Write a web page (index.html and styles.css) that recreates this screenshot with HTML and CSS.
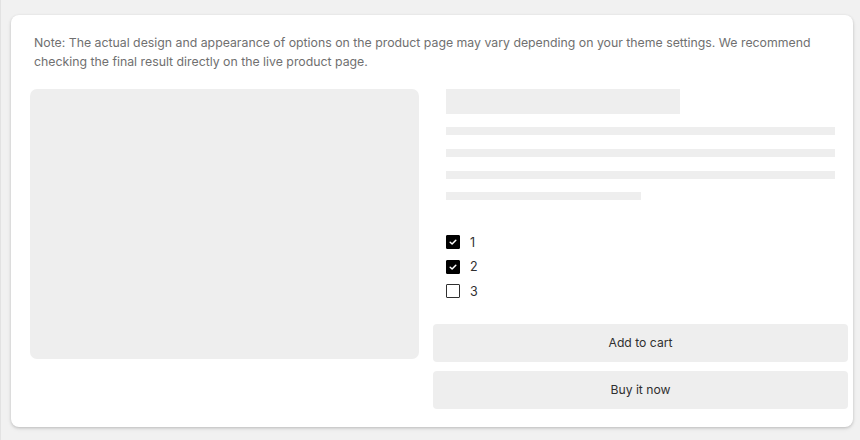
FILE: index.html
```html
<!DOCTYPE html>
<html lang="en">
<head>
<meta charset="utf-8">
<title>Product preview</title>
<link rel="stylesheet" href="styles.css">
</head>
<body>
<div class="card">
  <p class="note">Note: The actual design and appearance of options on the product page may vary depending on your theme settings. We recommend checking the final result directly on the live product page.</p>
  <div class="product">
    <div class="media"></div>
    <div class="info">
      <div class="details">
        <div class="sk-title"></div>
        <div class="sk-lines">
          <div class="sk-line"></div>
          <div class="sk-line"></div>
          <div class="sk-line"></div>
          <div class="sk-line short"></div>
        </div>
        <div class="options">
          <label class="option"><span class="box checked"><svg viewBox="0 0 14 14" width="14" height="14"><path d="M4.2 7.3 L6.1 9 L9.8 5.2" fill="none" stroke="#fff" stroke-width="1.5" stroke-linecap="round" stroke-linejoin="round"/></svg></span><span class="opt-label">1</span></label>
          <label class="option"><span class="box checked"><svg viewBox="0 0 14 14" width="14" height="14"><path d="M4.2 7.3 L6.1 9 L9.8 5.2" fill="none" stroke="#fff" stroke-width="1.5" stroke-linecap="round" stroke-linejoin="round"/></svg></span><span class="opt-label">2</span></label>
          <label class="option"><span class="box"></span><span class="opt-label">3</span></label>
        </div>
      </div>
      <div class="actions">
        <button class="btn">Add to cart</button>
        <button class="btn">Buy it now</button>
      </div>
    </div>
  </div>
</div>
</body>
</html>
```
FILE: styles.css
```css
html, body {
  margin: 0;
  padding: 0;
}
body {
  background: #f1f1f1;
  font-family: Inter, "Noto Sans", "Liberation Sans", sans-serif;
  width: 860px;
  height: 440px;
  overflow: hidden;
  box-sizing: border-box;
  border-left: 1px solid #e2e2e2;
}
.card {
  box-sizing: border-box;
  margin: 15px 0 0 10px;
  width: 842px;
  height: 412px;
  background: #ffffff;
  border-radius: 8px;
  box-shadow: 0 1px 3px rgba(0,0,0,0.18), 0 2px 5px rgba(0,0,0,0.06);
  padding: 0 5px 0 19px;
}
.note {
  margin: 0;
  padding: 18px 20px 0 4px;
  font-size: 12.3px;
  line-height: 19px;
  color: #707070;
}
.product {
  display: flex;
  gap: 14px;
  margin-top: 18px;
}
.media {
  width: 389px;
  height: 270px;
  background: #eeeeee;
  border-radius: 7px;
  flex: none;
}
.info {
  flex: 1;
  display: flex;
  flex-direction: column;
}
.details {
  padding: 0 13px;
}
.sk-title {
  width: 234px;
  height: 25px;
  background: #eeeeee;
}
.sk-lines {
  margin-top: 13px;
  display: flex;
  flex-direction: column;
  gap: 14px;
}
.sk-line {
  height: 8px;
  background: #eeeeee;
}
.sk-line.short {
  width: 195px;
  margin-top: -1px;
}
.options {
  margin-top: 35px;
  display: flex;
  flex-direction: column;
  gap: 10.5px;
}
.option {
  display: flex;
  align-items: center;
  height: 14px;
  gap: 10px;
}
.box {
  box-sizing: border-box;
  width: 14px;
  height: 14px;
  border: 1.5px solid #303030;
  border-radius: 1px;
  display: flex;
  align-items: center;
  justify-content: center;
  background: #fff;
}
.box.checked {
  background: #000;
  border-color: #000;
}
.box svg {
  display: block;
  flex: none;
}
.opt-label {
  font-size: 12.5px;
  color: #303030;
}
.actions {
  margin-top: 26px;
  display: flex;
  flex-direction: column;
  gap: 9px;
}
.btn {
  height: 38px;
  border: none;
  border-radius: 4px;
  background: #eeeeee;
  font-family: inherit;
  font-size: 12.2px;
  color: #303030;
  padding: 0 0 1px;
}
```
